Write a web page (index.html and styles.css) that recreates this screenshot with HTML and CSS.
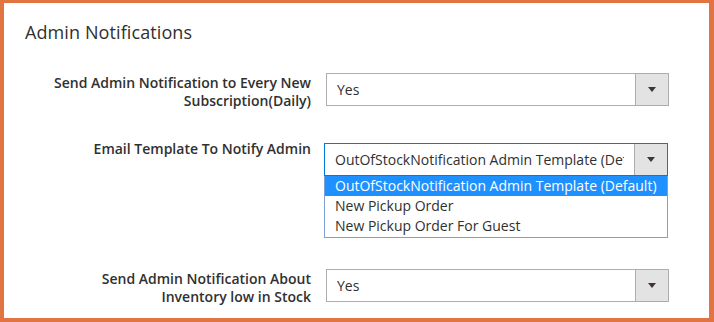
FILE: index.html
```html
<!DOCTYPE html>
<html>
<head>
<meta charset="utf-8">
<link rel="stylesheet" href="styles.css">
</head>
<body>
<div class="panel">
  <h2 class="title">Admin Notifications</h2>
  <div class="fields">
    <div class="row">
      <div class="label">Send Admin Notification to Every New Subscription(Daily)</div>
      <div class="control">
        <div class="select"><span class="value">Yes</span><span class="arrow"><i></i></span></div>
      </div>
    </div>
    <div class="row row-open">
      <div class="label label-tight">Email Template To Notify Admin</div>
      <div class="control control-open">
        <div class="select select-focus"><span class="value">OutOfStockNotification Admin Template (Default)</span><span class="arrow"><i></i></span></div>
        <ul class="options">
          <li class="option selected">OutOfStockNotification Admin Template (Default)</li>
          <li class="option">New Pickup Order</li>
          <li class="option">New Pickup Order For Guest</li>
        </ul>
      </div>
    </div>
    <div class="row row-last">
      <div class="label">Send Admin Notification About Inventory low in Stock</div>
      <div class="control">
        <div class="select"><span class="value">Yes</span><span class="arrow"><i></i></span></div>
      </div>
    </div>
  </div>
</div>
</body>
</html>
```

FILE: styles.css
```css
* { box-sizing: border-box; }
html, body { margin: 0; padding: 0; }
body {
  font-family: "Open Sans", "Noto Sans", sans-serif;
  color: #303030;
  background: #fff;
}
.panel {
  width: 714px;
  height: 322px;
  border-style: solid;
  border-color: #e07443;
  border-width: 3px 5px 4px 4px;
  background: #fff;
  padding: 0 0 0 21px;
  overflow: hidden;
}
.title {
  margin: 0;
  padding-top: 18px;
  font-size: 18px;
  font-weight: 400;
  line-height: 22px;
  letter-spacing: 0.1px;
  color: #303030;
}
.fields {
  display: flex;
  flex-direction: column;
  margin-top: 30px;
}
.row {
  display: grid;
  grid-template-columns: 262px 343px;
  column-gap: 15px;
  margin-left: 24px;
}
.row-open { margin-top: 33px; }
.row-last { margin-top: 31px; }
.label {
  text-align: right;
  font-size: 14px;
  font-weight: 600;
  line-height: 18px;
  padding-top: 1px;
  color: #303030;
}
.label-tight { padding-top: 0; margin-top: -3px; }
.control-open { margin-left: -2px; margin-right: 1px; }
.select {
  display: flex;
  height: 33px;
  border: 1px solid #adadad;
  background: #fff;
}
.select-focus { border-color: #007bdb; }
.value {
  flex: 1;
  min-width: 0;
  margin: 0 10px;
  font-size: 14px;
  line-height: 31px;
  white-space: nowrap;
  overflow: hidden;
  color: #303030;
}
.arrow {
  width: 33px;
  flex: none;
  border-left: 1px solid #adadad;
  background: #e3e3e3;
  display: flex;
  align-items: center;
  justify-content: center;
}
.arrow i {
  display: block;
  width: 0;
  height: 0;
  border-left: 4px solid transparent;
  border-right: 4px solid transparent;
  border-top: 5px solid #41362f;
}
.options {
  list-style: none;
  margin: 0;
  padding: 0 0 1px;
  border: 1px solid #7d9fd6;
  border-top: 0;
}
.option {
  height: 20px;
  line-height: 20px;
  padding-left: 10px;
  font-size: 14px;
  color: #303030;
  white-space: nowrap;
}
.option.selected {
  background: #1e90ff;
  color: #fff;
}
```
